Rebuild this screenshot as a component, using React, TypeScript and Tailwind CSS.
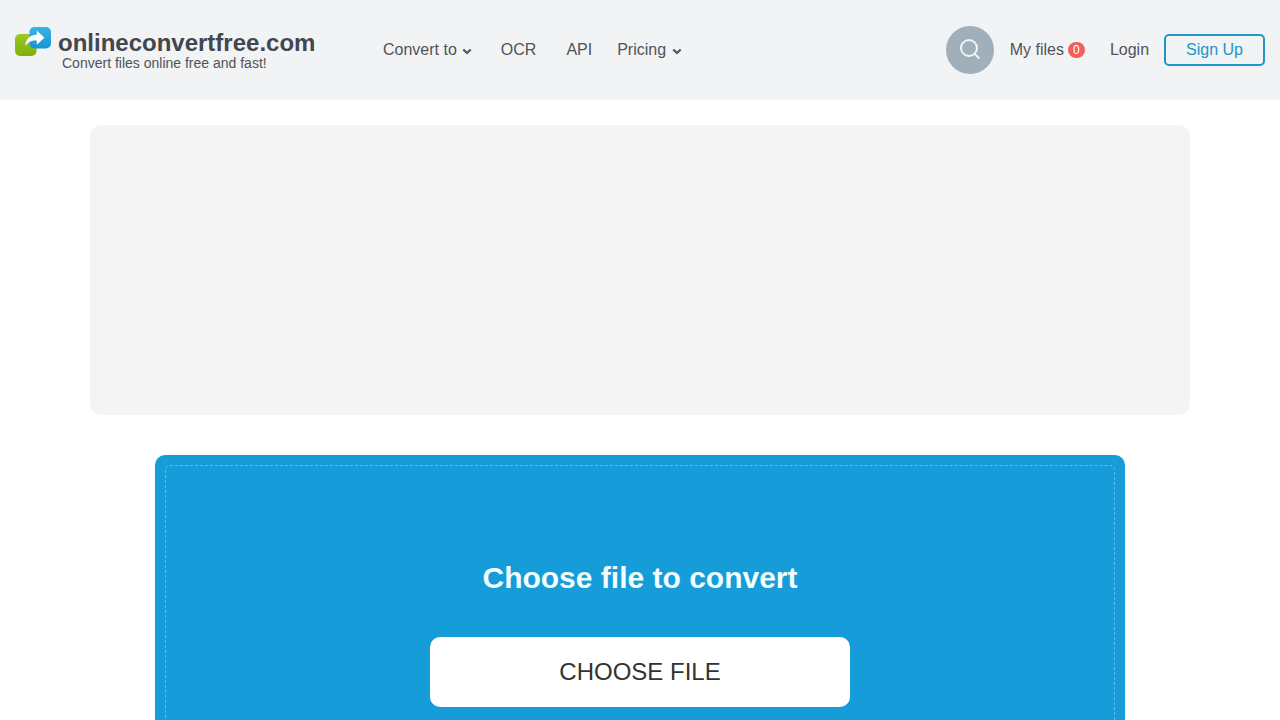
import React from 'react';

export default function App() {
  return (
    <div className="min-h-screen overflow-x-hidden bg-white font-['Liberation_Sans',Arial,sans-serif] text-base text-[#505357]">
      <Header />
      <main className="px-4">
        {/* Ad slot */}
        <aside className="mx-auto mt-[25px] h-[290px] max-w-[1100px] rounded-xl bg-[#f4f4f4]" />
        <Uploader />
      </main>
    </div>
  );
}

const Header: React.FC = () => (
  <header className="flex h-[100px] items-center justify-between bg-[#f1f3f5] px-[15px]">
    <div className="flex items-center">
      <a href="#" className="flex w-[368px] items-start gap-[6px] pb-[2px]">
        <LogoIcon className="h-[30px] w-[37px] shrink-0" />
        <span className="flex flex-col pt-1">
          <span className="text-2xl leading-6 font-bold text-[#42464f]">onlineconvertfree.com</span>
          <span className="pl-1 text-sm leading-4">Convert files online free and fast!</span>
        </span>
      </a>
      <nav className="flex items-center">
        <button type="button" className="flex items-center gap-[5px]">
          Convert to
          <ChevronIcon className="mt-[3px] h-[7px] w-[10px]" />
        </button>
        <a href="#ocr" className="ml-[29px]">OCR</a>
        <a href="#api" className="ml-[30px]">API</a>
        <button type="button" className="ml-[25px] flex items-center gap-[6px]">
          Pricing
          <ChevronIcon className="mt-[3px] h-[7px] w-[10px]" />
        </button>
      </nav>
    </div>

    <div className="flex items-center">
      <button
        type="button"
        aria-label="Search"
        className="flex size-12 items-center justify-center rounded-full bg-[#a0afba] text-[#f1f3f5]"
      >
        <SearchIcon className="size-6" />
      </button>
      <a href="#files" className="ml-4 flex items-center gap-1">
        My files
        <span className="flex h-4 w-[17px] items-center justify-center rounded-full bg-[#f1605f] text-xs leading-4 text-white">0</span>
      </a>
      <a href="#login" className="ml-[25px]">Login</a>
      <a
        href="#signup"
        className="ml-[15px] flex h-8 items-center rounded-[5px] border-2 border-[#2196cb] px-5 text-[#2196cb]"
      >
        Sign Up
      </a>
    </div>
  </header>
);

const Uploader: React.FC = () => (
  <section className="mx-auto mt-10 max-w-[970px] rounded-[10px] bg-[#159cd9] p-[10px]">
    <div className="flex flex-col items-center rounded-[5px] border border-dashed border-[#5fbde8] px-5 pt-[94px] pb-[94px]">
      <h1 className="text-center text-[30px] leading-9 font-bold text-[#f1fdff]">Choose file to convert</h1>
      <button
        type="button"
        className="mt-[41px] h-[70px] w-full max-w-[420px] rounded-[10px] bg-white text-2xl text-[#333333]"
      >
        CHOOSE FILE
      </button>
    </div>
  </section>
);

const LogoIcon: React.FC<{ className: string }> = ({ className }) => (
  <svg viewBox="0 0 37 30" className={className} aria-hidden="true">
    <defs>
      <linearGradient id="logo-green" x1="0" y1="0" x2="0" y2="1">
        <stop offset="0" stopColor="#9cc925" />
        <stop offset="1" stopColor="#7fb010" />
      </linearGradient>
      <linearGradient id="logo-blue" x1="0" y1="0" x2="0" y2="1">
        <stop offset="0" stopColor="#38b4e8" />
        <stop offset="1" stopColor="#1594d2" />
      </linearGradient>
    </defs>
    <rect x="0" y="7" width="21.5" height="22" rx="5" fill="url(#logo-green)" />
    <rect x="14.5" y="0" width="21.5" height="21.5" rx="5" fill="url(#logo-blue)" />
    <path d="M10.2 19.3C10.6 12.7 14.4 8.1 21.8 7.6V3.6L29.4 10.7L21.8 17.8V13.6C16.6 13.3 13 14.9 10.2 19.3Z" fill="#fff" />
  </svg>
);

const ChevronIcon: React.FC<{ className: string }> = ({ className }) => (
  <svg viewBox="0 0 10 7" className={className} fill="none" stroke="currentColor" strokeWidth="2.2" aria-hidden="true">
    <path d="M1.3 1.5L5 5L8.7 1.5" />
  </svg>
);

const SearchIcon: React.FC<{ className: string }> = ({ className }) => (
  <svg viewBox="0 0 24 24" className={className} fill="none" stroke="currentColor" strokeWidth="2" strokeLinecap="round" aria-hidden="true">
    <circle cx="11" cy="10" r="8" />
    <path d="M16.8 16L20.8 20" />
  </svg>
);
